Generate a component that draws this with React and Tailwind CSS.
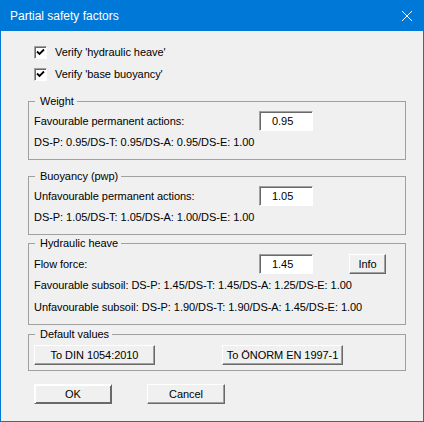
import React from 'react';

const font = "font-['Liberation_Sans',Arial,sans-serif] text-[11px] tracking-[-0.05px] text-black";

const Checkbox = ({ label }) => (
  <div className="flex h-[22px] items-center pl-[6px]">
    <span className="flex h-[13px] w-[13px] items-center justify-center border border-t-[#a0a0a0] border-l-[#a0a0a0] border-b-white border-r-white bg-white shadow-[inset_1px_1px_0_#696969]">
      <svg width="9" height="9" viewBox="0 0 9 9">
        <path d="M1 3.5 L3.5 6 L8 1.5" fill="none" stroke="#000" strokeWidth="1.8" />
      </svg>
    </span>
    <span className="ml-[8px]">{label}</span>
  </div>
);

const NumberBox = ({ value }) => (
  <div className="flex h-[20px] w-[54px] items-center border border-t-[#a0a0a0] border-l-[#a0a0a0] border-b-white border-r-white bg-white pl-[12px] shadow-[inset_1px_1px_0_#696969]">
    {value}
  </div>
);

const Button = ({ children, className }) => (
  <button
    className={`flex h-[20px] items-center justify-center border border-t-white border-l-white border-b-[#696969] border-r-[#696969] bg-[#f0f0f0] shadow-[inset_-1px_-1px_0_#a0a0a0] ${className}`}
  >
    {children}
  </button>
);

const Group = ({ title, className, children }) => (
  <fieldset className={`border border-[#a0a0a0] pl-[5px] pr-[5px] ${className}`}>
    <legend className="ml-[1px] pl-[5px] pr-[3px] leading-[14px]">{title}</legend>
    {children}
  </fieldset>
);

const Row = ({ children, className = '' }) => (
  <div className={`flex items-center ${className}`}>{children}</div>
);

export default function App() {
  return (
    <div className={`flex h-[422px] w-[424px] flex-col border border-[#0078d7] bg-[#f0f0f0] ${font}`}>
      {/* Title bar */}
      <div className="flex h-[30px] shrink-0 items-center justify-between bg-[#0078d7] pl-[9px] pr-[9px]">
        <span className="font-['Liberation_Sans',Arial,sans-serif] text-[12px] tracking-normal text-white">
          Partial safety factors
        </span>
        <svg width="12" height="12" viewBox="0 0 12 12" className="mr-[1px]">
          <path d="M1 1 L11 11 M11 1 L1 11" stroke="#fff" strokeWidth="1" />
        </svg>
      </div>

      <div className="flex flex-col pl-[27px] pr-[17px] pt-[10px]">
        <Checkbox label="Verify 'hydraulic heave'" />
        <Checkbox label="Verify 'base buoyancy'" />

        <Group title="Weight" className="mt-[9px] pb-[6px] pt-[3px]">
          <Row className="h-[20px]">
            <span className="w-[225px]">Favourable permanent actions:</span>
            <NumberBox value="0.95" />
          </Row>
          <Row className="h-[22px]">DS-P: 0.95/DS-T: 0.95/DS-A: 0.95/DS-E: 1.00</Row>
        </Group>

        <Group title="Buoyancy (pwp)" className="mt-[9px] pb-[6px] pt-[3px]">
          <Row className="h-[20px]">
            <span className="w-[225px]">Unfavourable permanent actions:</span>
            <NumberBox value="1.05" />
          </Row>
          <Row className="h-[22px]">DS-P: 1.05/DS-T: 1.05/DS-A: 1.00/DS-E: 1.00</Row>
        </Group>

        <Group title="Hydraulic heave" className="mt-[1px] pb-[6px] pt-[4px]">
          <Row className="h-[20px]">
            <span className="w-[225px]">Flow force:</span>
            <NumberBox value="1.45" />
            <Button className="ml-[36px] w-[37px]">Info</Button>
          </Row>
          <Row className="h-[22px]">Favourable subsoil: DS-P: 1.45/DS-T: 1.45/DS-A: 1.25/DS-E: 1.00</Row>
          <Row className="h-[22px]">Unfavourable subsoil: DS-P: 1.90/DS-T: 1.90/DS-A: 1.45/DS-E: 1.00</Row>
        </Group>

        <Group title="Default values" className="mt-[2px] pb-[5px] pt-[4px]">
          <Row className="gap-[67px]">
            <Button className="w-[121px]">To DIN 1054:2010</Button>
            <Button className="w-[121px]">To ÖNORM EN 1997-1</Button>
          </Row>
        </Group>

        <Row className="mt-[13px] gap-[35px] pl-[6px]">
          <Button className="w-[78px] border-[#000] shadow-[inset_1px_1px_0_#fff,inset_-1px_-1px_0_#696969]">OK</Button>
          <Button className="w-[78px]">Cancel</Button>
        </Row>
      </div>
    </div>
  );
}
